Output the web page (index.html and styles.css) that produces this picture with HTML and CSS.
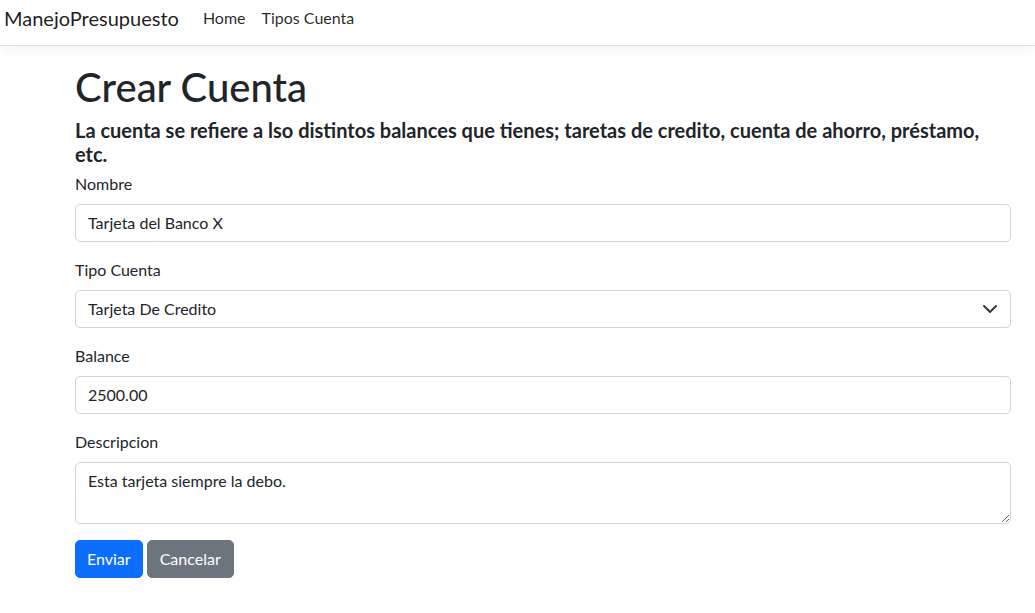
FILE: index.html
```html
<!DOCTYPE html>
<html lang="es">
<head>
<meta charset="utf-8">
<title>Crear Cuenta</title>
<link rel="stylesheet" href="styles.css">
</head>
<body>
<header class="navbar">
  <a class="brand" href="#">ManejoPresupuesto</a>
  <nav class="nav">
    <a class="nav-link" href="#">Home</a>
    <a class="nav-link" href="#">Tipos Cuenta</a>
  </nav>
</header>
<main class="container">
  <h1 class="title">Crear Cuenta</h1>
  <h5 class="subtitle">La cuenta se refiere a lso distintos balances que tienes; taretas de credito, cuenta de ahorro, préstamo, etc.</h5>
  <form class="form">
    <div class="field">
      <label class="label" for="nombre">Nombre</label>
      <input class="control" id="nombre" type="text" value="Tarjeta del Banco X">
    </div>
    <div class="field">
      <label class="label" for="tipo">Tipo Cuenta</label>
      <div class="select-wrap">
        <select class="control select" id="tipo">
          <option>Tarjeta De Credito</option>
        </select>
        <svg class="chevron" width="16" height="16" viewBox="0 0 16 16"><path d="M2 5l6 6 6-6" fill="none" stroke="#343a40" stroke-width="2" stroke-linecap="round" stroke-linejoin="round"/></svg>
      </div>
    </div>
    <div class="field">
      <label class="label" for="balance">Balance</label>
      <input class="control" id="balance" type="text" value="2500.00">
    </div>
    <div class="field">
      <label class="label" for="desc">Descripcion</label>
      <textarea class="control textarea" id="desc" rows="2">Esta tarjeta siempre la debo.</textarea>
    </div>
    <div class="actions">
      <button class="btn btn-primary" type="button">Enviar</button>
      <button class="btn btn-secondary" type="button">Cancelar</button>
    </div>
  </form>
</main>
</body>
</html>
```
FILE: styles.css
```css
* { box-sizing: border-box; }
html, body { margin: 0; padding: 0; background: #fff; }
body {
  font-family: Lato, "Noto Sans", sans-serif;
  font-size: 16px;
  line-height: 1.5;
  color: #212529;
}
.navbar {
  height: 46px;
  display: flex;
  align-items: center;
  padding: 0 4px 9px;
  border-bottom: 1px solid #dee2e6;
  box-shadow: 0 4px 12px rgba(0,0,0,0.05);
  margin-bottom: 17px;
}
.brand {
  font-size: 20px;
  color: rgba(0,0,0,0.9);
  text-decoration: none;
  margin-right: 16px;
  line-height: 30px;
}
.nav { display: flex; }
.nav-link {
  color: rgba(0,0,0,0.85);
  text-decoration: none;
  padding: 0 8px;
  font-size: 16px;
}
.container {
  width: 936px;
  margin-left: 75px;
}
.title {
  font-size: 40px;
  font-weight: 500;
  line-height: 1.2;
  margin: 0 0 7px;
}
.subtitle {
  font-size: 20px;
  font-weight: 700;
  line-height: 1.2;
  margin: 0 0 6px;
}
.form { margin: 0; }
.field { margin-bottom: 16px; }
.label {
  display: block;
  margin-bottom: 8px;
}
.control {
  display: block;
  width: 100%;
  padding: 6px 12px;
  font: inherit;
  font-size: 16px;
  line-height: 1.5;
  color: #212529;
  background: #fff;
  border: 1px solid #ced4da;
  border-radius: 5px;
  outline: none;
}
.select-wrap { position: relative; }
.select {
  appearance: none;
  -webkit-appearance: none;
  padding-right: 36px;
}
.chevron {
  position: absolute;
  right: 13px;
  top: 11px;
  pointer-events: none;
}
.textarea {
  resize: vertical;
  height: 62px;
}
.actions { display: flex; gap: 4px; }
.btn {
  font: inherit;
  font-size: 16px;
  line-height: 1.5;
  padding: 6px 12px;
  border: 1px solid transparent;
  border-radius: 5px;
  color: #fff;
}
.btn-primary { background: #0d6efd; border-color: #0d6efd; padding: 6px 11px; }
.btn-secondary { background: #6c757d; border-color: #6c757d; }
```
